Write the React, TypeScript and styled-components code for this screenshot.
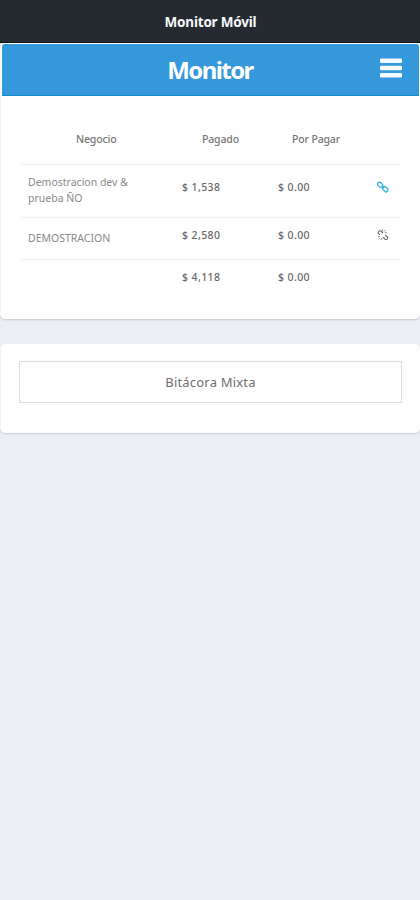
import React from "react";
import styled, { createGlobalStyle } from "styled-components";

const Global = createGlobalStyle`
  * { box-sizing: border-box; }
  body { margin: 0; background: #eceef3; font-family: "Noto Sans", "Open Sans", sans-serif; color: #5c5c5c; }
`;
const Page = styled.div`
  min-height: 900px;
  background: #eceef3;
`;
const AppBar = styled.header`
  height: 43px;
  padding: 2px 0 0 1px;
  display: flex;
  align-items: center;
  justify-content: center;
  background: #252a31;
  border-bottom: 1px solid #08090b;
  color: #f6f7f8;
  font-size: 13.5px;
  font-weight: 700;
  letter-spacing: -0.2px;
`;
const Card = styled.section<{ $first?: boolean }>`
  height: ${(p) => (p.$first ? 276 : 89)}px;
  margin: ${(p) => (p.$first ? "0 0 25px" : "0")};
  padding: ${(p) => (p.$first ? "1px 0 0" : "17px 18px 0")};
  background: #fefefe;
  border: solid #f3f4f6;
  border-width: 0 0 0 1px;
  border-radius: 5px;
  box-shadow: 0 1px 2px #c9cbd0;
`;
const Banner = styled.div`
  height: 52px;
  margin: 0 1px;
  padding: 0 17px 0 38px;
  display: grid;
  grid-template-columns: 1fr 22px;
  align-items: center;
  background: #3498db;
  border-bottom: 1px solid #168bcb;
  border-radius: 3px 3px 0 0;
`;
const Title = styled.h1`
  margin: 1px 0 0;
  text-align: center;
  color: #fff;
  font-size: 24px;
  line-height: 32px;
  font-weight: 700;
  letter-spacing: -1.6px;
`;
const MenuButton = styled.button`
  display: flex;
  padding: 0;
  margin-top: -3px;
  border: 0;
  background: none;
`;
const Table = styled.div`
  margin: 27px 20px 0 19px;
`;
const Row = styled.div<{ $h: number; $last?: boolean }>`
  display: grid;
  grid-template-columns: 162px 96px 98px 1fr;
  height: ${(p) => p.$h}px;
  border-bottom: ${(p) => (p.$last ? "0" : "1px solid #f0f0f0")};
`;
const Heading = styled.div<{ $left: number }>`
  padding: 8px 0 0 ${(p) => p.$left}px;
  font-size: 10.5px;
  line-height: 16px;
  font-weight: 500;
  letter-spacing: -0.15px;
  color: #777;
  white-space: nowrap;
`;
const Business = styled.div<{ $top: number }>`
  padding: ${(p) => p.$top}px 0 0 8px;
  font-size: 10.5px;
  line-height: 16px;
  color: #8b8b8b;
  white-space: pre-line;
`;
const Amount = styled.div<{ $top: number }>`
  padding-top: ${(p) => p.$top}px;
  font-size: 10.5px;
  line-height: 16px;
  font-weight: 500;
  letter-spacing: 0.4px;
  color: #686868;
`;
const Status = styled.div<{ $top: number; $color: string }>`
  padding: ${(p) => p.$top}px 0 0 1px;
  color: ${(p) => p.$color};
  svg { display: block; }
`;
const LogButton = styled.button`
  display: block;
  width: 100%;
  max-width: 384px;
  height: 42px;
  padding: 0;
  border: 1px solid #dcdcdc;
  background: #fefefe;
  color: #707070;
  font: 400 13px "Noto Sans", sans-serif;
  letter-spacing: 0.2px;
`;

const BarsIcon = () => (
  <svg width="22" height="20" viewBox="0 0 22 20" fill="#f4faff">
    <rect y="0.5" width="22" height="4.5" rx="1.2" />
    <rect y="7.7" width="22" height="4.5" rx="1.2" />
    <rect y="14.9" width="22" height="4.5" rx="1.2" />
  </svg>
);
const LinkIcon = () => (
  <svg width="12" height="12" viewBox="0 0 12 12" fill="none" stroke="currentColor" strokeWidth="1.3">
    <rect x="0.6" y="1.9" width="5.6" height="3.9" rx="1.8" transform="rotate(45 3.4 3.6)" />
    <rect x="5.6" y="6.3" width="5.6" height="3.9" rx="1.8" transform="rotate(45 8.4 8.2)" />
    <path d="M4.6 4.8 7.2 7.2" />
  </svg>
);
const BrokenLinkIcon = () => (
  <svg width="12" height="12" viewBox="0 0 12 12" fill="none" stroke="currentColor" strokeWidth="1.1">
    <path d="M2.8 5.8 1.5 4.5Q.7 3.5 1.6 2.5T3.7 1.8L6 4M6 8.2l1.8 1.9Q9 11 10.1 10.1T10.4 8L8.2 5.9" />
    <path d="M5.3.3v1.9M7.1 2.6 8.7 1M7.8 3.8h2M.8 7.6h2M3 8.7l-1.4 1.6M4.8 9v2" strokeWidth="0.7" />
  </svg>
);

export default function App() {
  return (
    <Page>
      <Global />
      <AppBar>Monitor Móvil</AppBar>
      <Card $first>
        <Banner>
          <Title>Monitor</Title>
          <MenuButton aria-label="Menú"><BarsIcon /></MenuButton>
        </Banner>
        <Table>
          <Row $h={42}>
            <Heading $left={56}>Negocio</Heading>
            <Heading $left={20}>Pagado</Heading>
            <Heading $left={14}>Por Pagar</Heading>
          </Row>
          <Row $h={53}>
            <Business $top={9}>{"Demostracion dev &\nprueba ÑO"}</Business>
            <Amount $top={14}>$ 1,538</Amount>
            <Amount $top={14}>$ 0.00</Amount>
            <Status $top={16} $color="#35b0dc"><LinkIcon /></Status>
          </Row>
          <Row $h={42}>
            <Business $top={12}>DEMOSTRACION</Business>
            <Amount $top={9}>$ 2,580</Amount>
            <Amount $top={9}>$ 0.00</Amount>
            <Status $top={11} $color="#666"><BrokenLinkIcon /></Status>
          </Row>
          <Row $h={42} $last>
            <span />
            <Amount $top={9}>$ 4,118</Amount>
            <Amount $top={9}>$ 0.00</Amount>
          </Row>
        </Table>
      </Card>
      <Card>
        <LogButton>Bitácora Mixta</LogButton>
      </Card>
    </Page>
  );
}
